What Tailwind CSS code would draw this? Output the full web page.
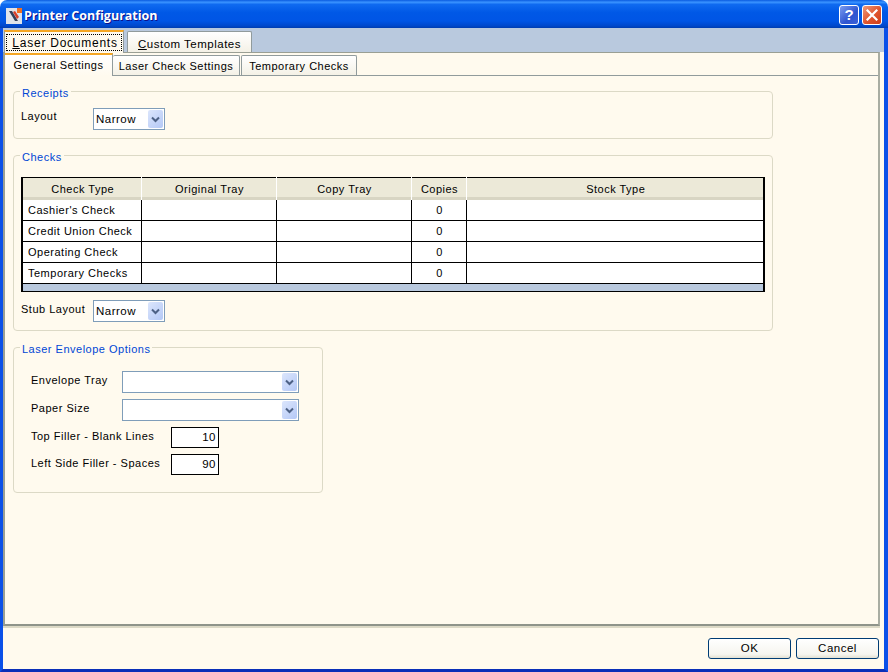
<!DOCTYPE html>
<html lang="en">
<head>
<meta charset="UTF-8">
<title>Printer Configuration</title>
<script src="https://cdn.jsdelivr.net/npm/@tailwindcss/browser@4"></script>
</head>
<body class="bg-white">
<div class="w-[888px] h-[672px] flex flex-col overflow-hidden rounded-t-[7px] font-['Liberation_Sans',sans-serif] text-[11px] tracking-[0.5px] text-black">

    <!-- title bar -->
    <div class="h-[28px] shrink-0 flex items-center pl-[6px] pr-[6px] bg-[linear-gradient(180deg,#0a5be0_0%,#3a93ff_8%,#0f6af0_16%,#0058e6_45%,#0055e5_75%,#0048cc_92%,#003db0_100%)]">
        <svg class="w-[16px] h-[16px] mr-[2px] mt-[3px]" viewBox="0 0 16 16">
            <rect width="16" height="16" fill="#dfe3ea"/>
            <rect x="11" y="0" width="5" height="5" fill="#f07020"/>
            <path d="M3 3 L9 13 L12 13 L6 3 Z" fill="#33405a"/>
            <path d="M7 4 L11 11 L13 9 L9 3 Z" fill="#d8402a"/>
        </svg>
        <span class="mt-[5px] text-white font-['Open_Sans',sans-serif] font-bold text-[12.5px] tracking-[0px] [text-shadow:1px_1px_#0f1089]">Printer Configuration</span>
        <div class="ml-auto flex gap-[3px] mt-[2px]">
            <div class="w-[20px] h-[20px] rounded-[3px] border border-white bg-[linear-gradient(135deg,#7a9cf0,#2f55d0_60%,#3a60d8)] flex items-center justify-center text-white font-bold text-[15px] font-['Liberation_Sans',sans-serif] tracking-normal">?</div>
            <div class="w-[20px] h-[20px] rounded-[3px] border border-white bg-[linear-gradient(135deg,#ee9a7c,#e0542c_55%,#cf3e1a)] flex items-center justify-center">
                <svg class="w-[12px] h-[12px]" viewBox="0 0 12 12"><path d="M1.5 1.5 L10.5 10.5 M10.5 1.5 L1.5 10.5" stroke="#fff" stroke-width="2.2" stroke-linecap="square" fill="none"/></svg>
            </div>
        </div>
    </div>

    <!-- window body, blue frame -->
    <div class="flex-1 min-h-0 flex flex-col bg-[#fffaee] border-l-[3px] border-r-[4px] border-b-[3px] border-l-[#0a50e8] border-r-[#0a50e8] border-b-[#0a2fb8]">

        <!-- outer tabs -->
        <div class="h-[24px] shrink-0 flex items-end bg-[#b9c9de] pl-[1px] text-[12px] tracking-[0.75px]">
            <div class="w-[120px] h-[23px] relative z-10 -mb-px bg-[#fffaee] border-x border-[#919b9c] border-t-2 border-t-[#f5a623] flex items-center justify-center">
                <span class="border border-dotted border-black w-[116px] h-[17px] flex items-center justify-center leading-none pl-[2px]"><span><span class="underline">L</span>aser Documents</span></span>
            </div>
            <div class="w-[125px] h-[21px] ml-[3px] border-x border-t border-[#919b9c] rounded-t-[2px] bg-[linear-gradient(180deg,#ffffff,#f4f1e6)] flex items-center justify-center pt-[5px] text-[11.5px] tracking-[0.5px]">
                <span><span class="underline">C</span>ustom Templates</span>
            </div>
        </div>

        <!-- outer panel -->
        <div class="h-[574px] w-[877px] shrink-0 flex flex-col border-2 border-t border-[#9a9f94] border-r-[#a9ada2] border-b-[#8f948a] shadow-[0_2px_0_#dcd9c6]">

            <!-- inner tabs -->
            <div class="h-[23px] shrink-0 flex items-end border-b border-[#919b9c]">
                <div class="w-[108px] h-[23px] relative z-10 -mb-px bg-[linear-gradient(180deg,#ffffff,#fffaee)] border-r border-[#919b9c] border-t-2 border-t-[#f5a623] flex items-center justify-center pb-[1px]">General Settings</div>
                <div class="w-[127px] h-[20px] border-t border-r border-[#919b9c] rounded-t-[2px] bg-[linear-gradient(180deg,#ffffff,#f4f1e6)] flex items-center justify-center pt-[2px]">Laser Check Settings</div>
                <div class="w-[116px] h-[20px] ml-[1px] border-x border-t border-[#919b9c] rounded-t-[2px] bg-[linear-gradient(180deg,#ffffff,#f4f1e6)] flex items-center justify-center pt-[2px]">Temporary Checks</div>
            </div>

            <div class="flex-1 flex flex-col items-start pt-[8px] pl-[8px]">

                <!-- receipts -->
                <fieldset class="w-[760px] h-[55px] border border-[#dcd9c6] rounded-[4px] px-[7px]">
                    <legend class="-ml-[1px] px-[2px] h-[14px] leading-[18px] text-[#0046d5]">Receipts</legend>
                    <div class="flex items-start pt-[2px]">
                        <span class="w-[72px] leading-[14px] pt-[9px]">Layout</span>
                        <div class="w-[72px] h-[22px] mt-[8px] border border-[#7f9db9] bg-white flex items-center pl-[2px] pr-[1px]">
                            <span class="flex-1 text-[11.5px] pt-[2px]">Narrow</span>
                            <div class="w-[15px] h-[18px] rounded-[2px] bg-[linear-gradient(135deg,#dce6fc,#b4c8f6)] flex items-center justify-center">
                                <svg class="w-[9px] h-[7px]" viewBox="0 0 9 7"><path d="M1 1.5 L4.5 5 L8 1.5" stroke="#4d6185" stroke-width="2" fill="none"/></svg>
                            </div>
                        </div>
                    </div>
                </fieldset>

                <!-- checks -->
                <fieldset class="w-[760px] h-[183px] mt-[9px] border border-[#dcd9c6] rounded-[4px] px-[7px]">
                    <legend class="-ml-[1px] px-[2px] h-[14px] leading-[18px] text-[#0046d5]">Checks</legend>
                    <table class="mt-[15px] table-fixed border-collapse w-[744px] border-t border-b border-black border-l-2 border-r-2">
                        <thead>
                            <tr class="h-[22px] bg-[#ece9d8] shadow-[inset_0_-3px_0_#d8d5c3]">
                                <th class="w-[119px] font-normal border-r border-white pl-[2px]">Check Type</th>
                                <th class="w-[135px] font-normal border-r border-white pl-[2px]">Original Tray</th>
                                <th class="w-[135px] font-normal border-r border-white pl-[2px]">Copy Tray</th>
                                <th class="w-[55px] font-normal border-r border-white pl-[2px]">Copies</th>
                                <th class="font-normal pl-[2px]">Stock Type</th>
                            </tr>
                        </thead>
                        <tbody class="bg-white">
                            <tr class="h-[21px] border-b border-black"><td class="pl-[5px] border-r border-black">Cashier's Check</td><td class="border-r border-black"></td><td class="border-r border-black"></td><td class="text-center pl-[2px] border-r border-black">0</td><td></td></tr>
                            <tr class="h-[21px] border-b border-black"><td class="pl-[5px] border-r border-black">Credit Union Check</td><td class="border-r border-black"></td><td class="border-r border-black"></td><td class="text-center pl-[2px] border-r border-black">0</td><td></td></tr>
                            <tr class="h-[21px] border-b border-black"><td class="pl-[5px] border-r border-black">Operating Check</td><td class="border-r border-black"></td><td class="border-r border-black"></td><td class="text-center pl-[2px] border-r border-black">0</td><td></td></tr>
                            <tr class="h-[21px] border-b border-black"><td class="pl-[5px] border-r border-black">Temporary Checks</td><td class="border-r border-black"></td><td class="border-r border-black"></td><td class="text-center pl-[2px] border-r border-black">0</td><td></td></tr>
                            <tr class="h-[8px] bg-[#b9c9de]"><td colspan="5"></td></tr>
                        </tbody>
                    </table>
                    <div class="flex items-start mt-[8px]">
                        <span class="w-[72px] leading-[14px] pt-[2px]">Stub Layout</span>
                        <div class="w-[72px] h-[22px] border border-[#7f9db9] bg-white flex items-center pl-[2px] pr-[1px]">
                            <span class="flex-1 text-[11.5px] pt-[2px]">Narrow</span>
                            <div class="w-[15px] h-[18px] rounded-[2px] bg-[linear-gradient(135deg,#dce6fc,#b4c8f6)] flex items-center justify-center">
                                <svg class="w-[9px] h-[7px]" viewBox="0 0 9 7"><path d="M1 1.5 L4.5 5 L8 1.5" stroke="#4d6185" stroke-width="2" fill="none"/></svg>
                            </div>
                        </div>
                    </div>
                </fieldset>

                <!-- envelope -->
                <fieldset class="w-[310px] h-[153px] mt-[9px] border border-[#dcd9c6] rounded-[4px] pl-[17px]">
                    <legend class="-ml-[11px] px-[2px] h-[14px] leading-[18px] text-[#0046d5]">Laser Envelope Options</legend>
                    <div class="flex items-start mt-[17px] h-[22px]">
                        <span class="w-[91px] leading-[14px] pt-[2px]">Envelope Tray</span>
                        <div class="w-[177px] h-[22px] border border-[#7f9db9] bg-white flex items-center justify-end pr-[1px]">
                            <div class="w-[15px] h-[18px] rounded-[2px] bg-[linear-gradient(135deg,#dce6fc,#b4c8f6)] flex items-center justify-center">
                                <svg class="w-[9px] h-[7px]" viewBox="0 0 9 7"><path d="M1 1.5 L4.5 5 L8 1.5" stroke="#4d6185" stroke-width="2" fill="none"/></svg>
                            </div>
                        </div>
                    </div>
                    <div class="flex items-start mt-[6px] h-[22px]">
                        <span class="w-[91px] leading-[14px] pt-[2px]">Paper Size</span>
                        <div class="w-[177px] h-[22px] border border-[#7f9db9] bg-white flex items-center justify-end pr-[1px]">
                            <div class="w-[15px] h-[18px] rounded-[2px] bg-[linear-gradient(135deg,#dce6fc,#b4c8f6)] flex items-center justify-center">
                                <svg class="w-[9px] h-[7px]" viewBox="0 0 9 7"><path d="M1 1.5 L4.5 5 L8 1.5" stroke="#4d6185" stroke-width="2" fill="none"/></svg>
                            </div>
                        </div>
                    </div>
                    <div class="flex items-start mt-[6px] h-[21px]">
                        <span class="w-[140px] leading-[14px] pt-[2px]">Top Filler - Blank Lines</span>
                        <div class="w-[48px] h-[21px] border border-black bg-white flex items-center justify-end pr-[2px] text-[11.5px]">10</div>
                    </div>
                    <div class="flex items-start mt-[6px] h-[21px]">
                        <span class="w-[140px] leading-[14px] pt-[2px]">Left Side Filler - Spaces</span>
                        <div class="w-[48px] h-[21px] border border-black bg-white flex items-center justify-end pr-[2px] text-[11.5px]">90</div>
                    </div>
                </fieldset>
            </div>
        </div>

        <!-- bottom bar -->
        <div class="flex justify-end gap-[5px] pt-[12px] pr-[5px] text-[11.5px]">
            <button class="w-[83px] h-[21px] rounded-[3px] border border-[#003c74] bg-[linear-gradient(180deg,#ffffff,#f6f5ef_80%,#e3e0d2)]">OK</button>
            <button class="w-[83px] h-[21px] rounded-[3px] border border-[#003c74] bg-[linear-gradient(180deg,#ffffff,#f6f5ef_80%,#e3e0d2)]">Cancel</button>
        </div>
    </div>
</div>
</body>
</html>
